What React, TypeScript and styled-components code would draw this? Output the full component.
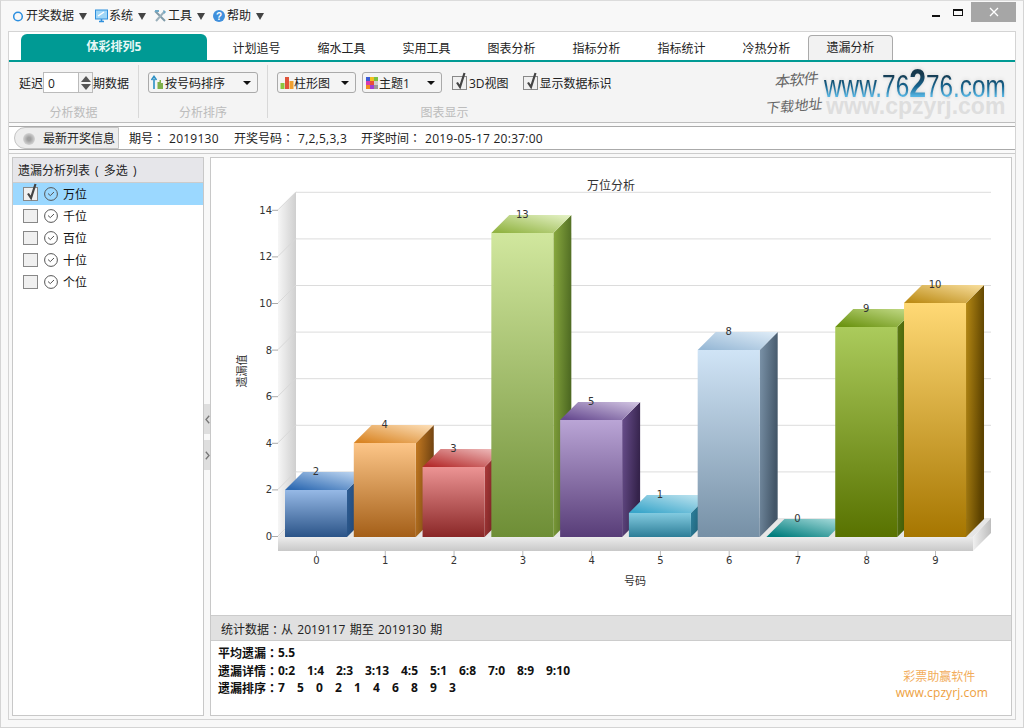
import React from "react";
import styled, { createGlobalStyle } from "styled-components";

const FONT = `"Open Sans", "Noto Sans CJK SC", sans-serif`;

const Global = createGlobalStyle`
  html, body { margin: 0; padding: 0; background: #f5f5f5; overflow: hidden; }
  * { box-sizing: border-box; }
  body { font: 12px/16px ${FONT}; color: #222; }
`;

const Root = styled.div`
  width: 1024px; height: 728px; border: 1px solid #d4d4d4; border-top-color: #dcdcdc;
  background: #f8f8f8; display: flex; flex-direction: column; padding-bottom: 7px; overflow: hidden;
`;
const TitleBar = styled.div`
  height: 30px; flex: none; display: flex; align-items: flex-start; padding-left: 12px;
`;
const MenuItem = styled.div`
  display: flex; align-items: center; height: 30px; margin-right: 8px; gap: 1px; color: #222;
`;
const MenuIconWrap = styled.span`
  display: flex; margin-right: 1px;
`;
const MenuArrow = styled.span`
  width: 0; height: 0; margin-left: 4px;
  border-left: 4px solid transparent; border-right: 4px solid transparent; border-top: 7px solid #444;
`;
const WinControls = styled.div`
  margin-left: auto; display: flex; align-items: flex-start; margin-right: 7px;
`;
const MinBtn = styled.span`
  width: 8px; height: 2px; background: #111; margin-top: 14px; margin-right: 13px;
`;
const MaxBtn = styled.span`
  width: 10px; height: 7px; border: 1px solid #111; border-top-width: 2px; margin-top: 8px; margin-right: 8px;
`;
const CloseBtn = styled.span`
  width: 45px; height: 20px; margin-top: 1px; background: #a6a6a6; display: flex; align-items: center; justify-content: center;
`;
const Frame = styled.div`
  flex: 1; margin: 0 7px; border: 1px solid #d4d4d4; background: #f5f5f5; display: flex; flex-direction: column; min-height: 0;
`;
const TabBar = styled.div`
  height: 30px; flex: none; background: #fff; border-bottom: 2px solid #009a94; display: flex; align-items: flex-end; padding-left: 12px;
`;
const BrandTab = styled.div`
  width: 186px; height: 26px; margin-right: 7px; background: #009a94; color: #e8f8f6; font-weight: 700; border-radius: 6px 6px 0 0;
  display: flex; align-items: center; justify-content: center; padding-bottom: 1px;
`;
const Tab = styled.div<{ $active?: boolean }>`
  width: 85px; height: 25px; display: flex; align-items: center; justify-content: center; color: #222;
  ${(p) => p.$active ? `background:#f2f2f2;border:1px solid #aaa;border-bottom:0;border-radius:4px 4px 0 0;margin-left:-1px;padding-bottom:1px;` : `padding-top:3px;`}
`;
const Toolbar = styled.div`
  height: 61px; flex: none; border-bottom: 1px solid #bdbdbd; background: #f4f4f4; display: flex; align-items: flex-start;
`;
const Group = styled.div<{ $w: number; $pad: number; $noLine?: boolean }>`
  width: ${(p) => p.$w}px; height: 53px; margin-top: 3px; padding-left: ${(p) => p.$pad}px; flex: none;
  border-right: 1px solid ${(p) => (p.$noLine ? "transparent" : "#d8d8d8")}; display: flex; flex-direction: column;
`;
const GroupRow = styled.div`
  height: 21px; margin-top: 7px; display: flex; align-items: center; flex: none;
`;
const RowText = styled.span`
  padding-top: 2px; white-space: nowrap;
`;
const GroupLabel = styled.div<{ $pad: number }>`
  margin-top: 13px; margin-left: -${(p) => p.$pad}px; line-height: 14px; text-align: center; color: #bcbcbc;
`;
const NumberInput = styled.div`
  width: 36px; height: 21px; border: 1px solid #bbb; background: #fff; padding: 2px 0 0 4px; display: flex; align-items: center; font-size: 12px; color: #222;
`;
const Spin = styled.div`
  width: 14px; height: 21px; border: 1px solid #bbb; border-left: 0; display: flex; flex-direction: column; align-items: center; justify-content: center; gap: 2px; background: #f2f2f2;
`;
const Tri = styled.span<{ $dir: "up" | "down" }>`
  width: 0; height: 0; border-left: 5px solid transparent; border-right: 5px solid transparent;
  ${(p) => (p.$dir === "up" ? "border-bottom: 6px solid #555;" : "border-top: 6px solid #555;")}
`;
const Select = styled.div<{ $w: number; $gapRight?: number }>`
  width: ${(p) => p.$w}px; height: 21px; margin-right: ${(p) => p.$gapRight ?? 0}px; border: 1px solid #aaa; border-radius: 3px; background: #f4f4f4;
  display: flex; align-items: center; padding: 0 6px 0 2px; color: #222;
`;
const SelectArrow = styled.span`
  margin-left: auto; width: 0; height: 0; border-left: 4px solid transparent; border-right: 4px solid transparent; border-top: 4px solid #111;
`;
const Check = styled.label<{ $gapRight?: number }>`
  display: flex; align-items: center; gap: 2px; margin-right: ${(p) => p.$gapRight ?? 0}px; color: #222;
`;
const CheckBox = styled.span`
  position: relative; width: 15px; height: 14px; border: 1px solid #888; background: #f0f0f0; flex: none; display: block;
`;
const CheckMark = styled.svg`
  position: absolute; left: 1px; top: -5px;
`;
const Logo = styled.div`
  margin-left: auto; margin-right: 9px; margin-top: 1px; display: flex; width: 238px; height: 58px;
`;
const Calli = styled.div`
  width: 56px; flex: none; color: #666; font-size: 14px; line-height: 24px; font-family: "Noto Sans CJK SC", sans-serif; font-weight: 400;
  transform: skewX(-12deg) rotate(-5deg); padding-top: 2px;
`;
const CalliTop = styled.div`
  padding-left: 6px; font-size: 15px; line-height: 28px; letter-spacing: -1px;
`;
const WebCol = styled.div`
  display: flex; flex-direction: column; font-family: "Liberation Sans", sans-serif; width: 182px;
`;
const WebMain = styled.div`
  width: 240px; padding-top: 10px; font-size: 32px; line-height: 26px; white-space: nowrap; transform-origin: left top; transform: scaleX(.76);
  background: linear-gradient(180deg, #16384c 30%, #16648f 65%, #55b4e2 92%);
  -webkit-background-clip: text; background-clip: text; color: transparent; filter: drop-shadow(0 0 2px #cfcfcf);
`;
const BigDigit = styled.span`
  font-size: 40px; font-weight: 700; line-height: 0;
`;
const WebSub = styled.div`
  font-size: 23px; font-weight: 700; line-height: 14px; color: #dedede; white-space: nowrap; margin-left: 2px; letter-spacing: 0;
`;
const Spacer = styled.div`
  height: 3px; flex: none; background: #fafafa;
`;
const InfoBar = styled.div`
  height: 24px; flex: none; background: #fff; border-top: 1px solid #aaa; border-bottom: 1px solid #aaa; display: flex; align-items: center; padding-left: 5px;
`;
const InfoBtn = styled.div`
  width: 105px; height: 22px; border: 1px solid #c4c4c4; border-radius: 14px 0 0 14px; background: #ededed; display: flex; align-items: center; padding: 1px 0 0 8px; gap: 8px;
  margin-right: 10px; white-space: nowrap;
`;
const Led = styled.span`
  width: 12px; height: 12px; border-radius: 50%; flex: none; background: radial-gradient(circle, #a0a0a0 20%, #d8d8d8 75%, #ededed);
`;
const InfoItem = styled.span<{ $w: number }>`
  width: ${(p) => p.$w}px; flex: none; white-space: nowrap; color: #222; padding-top: 1px;
`;
const InfoVal = styled.span`
  margin-left: 4px; letter-spacing: .25px;
`;
const Colon = styled.span`
  font-family: "Noto Sans CJK TC", sans-serif;
`;
const Main = styled.div`
  flex: 1; min-height: 0; border-top: 1px solid #ccc; padding: 3px; display: flex; background: #f8f8f8;
`;
const LeftPanel = styled.div`
  width: 192px; flex: none; border: 1px solid #c8c8c8; background: #fff; display: flex; flex-direction: column;
`;
const LeftHead = styled.div`
  height: 25px; flex: none; padding: 2px 0 0 5px; background: #e6e6ea; border-bottom: 1px solid #ccc; display: flex; align-items: center; color: #222; word-spacing: 2px; white-space: pre;
`;
const ListRow = styled.div<{ $on?: boolean }>`
  height: 22px; flex: none; display: flex; align-items: center; padding-left: 10px; background: ${(p) => (p.$on ? "#9bd8ff" : "transparent")}; gap: 6px; color: #111;
`;
const ListText = styled.span`
  padding-top: 2px; margin-left: -1px;
`;
const Splitter = styled.div`
  width: 6px; flex: none; display: flex; flex-direction: column; align-items: stretch; justify-content: flex-start; padding-top: 247px; gap: 6px; background: #f8f8f8;
`;
const SplitTab = styled.div<{ $h: number }>`
  height: ${(p) => p.$h}px; background: #dedede; display: flex; align-items: center; justify-content: center;
`;
const RightPanel = styled.div`
  flex: 1; min-width: 0; border: 1px solid #c8c8c8; background: #fff; display: flex; flex-direction: column;
`;
const Chart = styled.svg`
  display: block; flex: none; width: 800px; height: 457px;
`;
const StatHead = styled.div`
  height: 26px; flex: none; background: #e0e0e0; border-top: 1px solid #ccc; border-bottom: 1px solid #ccc; padding: 3px 0 0 10px; display: flex; align-items: center; color: #222; word-spacing: 1.2px; white-space: pre;
`;
const Stats = styled.div`
  flex: 1; display: flex; justify-content: space-between; padding: 3px 23px 0 7px;
`;
const StatList = styled.div`
  font-weight: 700; color: #111; line-height: 17.5px;
`;
const StatLine = styled.div`
  display: flex; white-space: pre; height: 17.5px;
`;
const StatKey = styled.span`
  width: 60px; flex: none;
`;
const StatVal = styled.span<{ $w: number }>`
  width: ${(p) => p.$w}px; flex: none;
`;
const Mark = styled.div`
  padding-top: 25px; color: #f0a54a; line-height: 16px; text-align: center;
`;
const MarkTitle = styled.div`
  padding-right: 5px; color: #f2ad5c;
`;
const MarkUrl = styled.div`
  color: #ee9f3e; font-size: 12px; letter-spacing: .1px;
`;

const bars = [
  { v: 2, top: 490, f: ["#96b9e6", "#2b5488"], s: ["#2f6098", "#1c3c66"], t: ["#2e6ab2", "#c6dcf5"] },
  { v: 4, top: 443, f: ["#fdc688", "#a45f18"], s: ["#c87c22", "#6c4010"], t: ["#d98524", "#fde0ba"] },
  { v: 3, top: 467, f: ["#ec9494", "#8a2727"], s: ["#b23c3c", "#5c1a1a"], t: ["#b52d2d", "#f2c4c4"] },
  { v: 13, top: 233, f: ["#d1e79e", "#6e8e36"], s: ["#8bab40", "#4e6a22"], t: ["#92b443", "#e6f3c8"] },
  { v: 5, top: 420, f: ["#baa5d6", "#583d78"], s: ["#6a4f8e", "#35234b"], t: ["#684c91", "#d3c6e3"] },
  { v: 1, top: 513, f: ["#83cbe0", "#2d7d97"], s: ["#2f86a3", "#1c5266"], t: ["#3aa6ca", "#c8e8f2"] },
  { v: 8, top: 350, f: ["#d0e4f6", "#7690a6"], s: ["#7c94aa", "#435668"], t: ["#98b9d6", "#e0edf8"] },
  { v: 0, top: 537, f: ["#008080", "#008080"], s: ["#008080", "#008080"], t: ["#007d7d", "#b0e0e0"] },
  { v: 9, top: 327, f: ["#abcb5c", "#587200"], s: ["#5c7a14", "#384e00"], t: ["#6c9412", "#c6dd8c"] },
  { v: 10, top: 303, f: ["#ffd975", "#a67600"], s: ["#b68914", "#5c4200"], t: ["#bd8d18", "#f9df9e"] },
];
const barX = (i: number) => 285 + i * 68.78;
const labelStyle = { fontFamily: '"DejaVu Sans", sans-serif', fontSize: 10, fill: "#333" };
const cjkLabel = { fontFamily: '"Noto Sans CJK SC", sans-serif', fontSize: 11, fill: "#333" };

function ChartView() {
  const ticks = [0, 2, 4, 6, 8, 10, 12, 14];
  const yOf = (v: number) => 536 - v * 23.3;
  return (
    <Chart viewBox="211 158 800 457">
      <defs>
        <linearGradient id="wall" x1="0" x2="1" y1="0" y2="0">
          <stop offset="0" stopColor="#f6f6f6" />
          <stop offset="1" stopColor="#cfcfcf" />
        </linearGradient>
        <linearGradient id="floorFront" x1="0" x2="0" y1="0" y2="1">
          <stop offset="0" stopColor="#ececec" />
          <stop offset="1" stopColor="#c8c8c8" />
        </linearGradient>
        <linearGradient id="floorSide" x1="0" x2="1" y1="0" y2="0">
          <stop offset="0" stopColor="#f0f0f0" />
          <stop offset="1" stopColor="#bdbdbd" />
        </linearGradient>
        {bars.map((b, i) => (
          <React.Fragment key={i}>
            <linearGradient id={`f${i}`} x1="0" x2="0" y1="0" y2="1">
              <stop offset="0" stopColor={b.f[0]} />
              <stop offset="1" stopColor={b.f[1]} />
            </linearGradient>
            <linearGradient id={`s${i}`} x1="0" x2="1" y1="0" y2="0.35">
              <stop offset="0" stopColor={b.s[0]} />
              <stop offset="1" stopColor={b.s[1]} />
            </linearGradient>
            <linearGradient id={`t${i}`} x1="0" x2="1" y1="1" y2="0">
              <stop offset="0.08" stopColor={b.t[0]} />
              <stop offset="1" stopColor={b.t[1]} />
            </linearGradient>
          </React.Fragment>
        ))}
      </defs>

      {ticks.map((v) => (
        <line key={v} x1="296" x2="991" y1={yOf(v) - 18 + 0.5} y2={yOf(v) - 18 + 0.5} stroke="#dcdcdc" />
      ))}
      <polygon points="278,210 296,192 296,518 278,536" fill="url(#wall)" />
      {ticks.map((v) => (
        <g key={v}>
          <line x1="278" x2="296" y1={yOf(v)} y2={yOf(v) - 18} stroke="#d8d8d8" />
          <line x1="272" x2="278" y1={yOf(v) + 0.5} y2={yOf(v) + 0.5} stroke="#aaa" />
          <text x="272" y={yOf(v) + 4} textAnchor="end" {...labelStyle}>{v}</text>
        </g>
      ))}

      <polygon points="278,537 296,518 991,518 973,537" fill="#e6e6e6" />
      <polygon points="973,537 991,518 991,533 973,551" fill="url(#floorSide)" />
      <rect x="278" y="537" width="695" height="14" fill="url(#floorFront)" />

      {bars.map((b, i) => {
        const x = barX(i);
        const t = b.top;
        return (
          <g key={i}>
            {b.v > 0 && <polygon points={`${x + 62},${t} ${x + 80},${t - 18} ${x + 80},${519} ${x + 62},537`} fill={`url(#s${i})`} />}
            {b.v > 0 && <rect x={x} y={t} width="62" height={537 - t} fill={`url(#f${i})`} />}
            <polygon points={`${x},${t} ${x + 62},${t} ${x + 80},${t - 18} ${x + 18},${t - 18}`} fill={`url(#t${i})`} />
          </g>
        );
      })}
      {bars.map((b, i) => (
        <text key={i} x={barX(i) + 31} y={b.top - 15} textAnchor="middle" {...labelStyle}>{b.v}</text>
      ))}
      {bars.map((_, i) => (
        <g key={i}>
          <line x1={barX(i) + 31.5} x2={barX(i) + 31.5} y1="551" y2="556" stroke="#bbb" />
          <text x={barX(i) + 31.5} y="564" textAnchor="middle" {...labelStyle}>{i}</text>
        </g>
      ))}
      <text x="611" y="190" textAnchor="middle" {...cjkLabel} fontSize={12}>万位分析</text>
      <text x="635" y="585" textAnchor="middle" {...cjkLabel}>号码</text>
      <text transform="translate(246 371) rotate(-90)" textAnchor="middle" {...cjkLabel}>遗漏值</text>
    </Chart>
  );
}

const Ring = () => (
  <svg width="11" height="11" viewBox="0 0 11 11"><circle cx="5" cy="5.5" r="4.3" fill="none" stroke="#2c8fe0" strokeWidth="1.5" /></svg>
);
const MonitorIcon = () => (
  <svg width="13" height="14" viewBox="0 0 13 14">
    <rect x="0.5" y="1" width="12" height="9" fill="#9fd6f7" stroke="#2f8fdc" />
    <path d="M3 7 L9 3" stroke="#fff" strokeWidth="1.5" />
    <path d="M4 12.5h5M6.5 10v2.5" stroke="#2f8fdc" strokeWidth="1.6" />
  </svg>
);
const ToolIcon = () => (
  <svg width="13" height="14" viewBox="0 0 13 14">
    <path d="M1 2 L11 12" stroke="#7f9aa8" strokeWidth="2" />
    <path d="M11 2 L2 12" stroke="#9ab0bb" strokeWidth="2" />
    <path d="M1 1h4v2H1zM9 1l3 2-2 2z" fill="#6ea9c8" />
  </svg>
);
const HelpIcon = () => (
  <svg width="12" height="12" viewBox="0 0 12 12">
    <circle cx="6" cy="6" r="6" fill="#3f8fdc" />
    <text x="6" y="9.5" textAnchor="middle" fontSize="10" fontWeight="700" fill="#fff" fontFamily="'Liberation Sans', sans-serif">?</text>
  </svg>
);
const SortIcon = () => (
  <svg width="14" height="15" viewBox="0 0 14 15">
    <path d="M3 14V4M0.5 5L3 1.5 5.5 5" stroke="#2b8fc4" strokeWidth="1.6" fill="none" />
    <path d="M6.5 14V7h2V5h1.5v3H12v6z" fill="#7fb04a" />
  </svg>
);
const BarIcon = () => (
  <svg width="14" height="15" viewBox="0 0 14 15">
    <rect x="0.5" y="8" width="4" height="6" fill="#8cc63f" />
    <rect x="5" y="2" width="4" height="12" fill="#e0533a" />
    <rect x="9.5" y="6" width="4" height="8" fill="#f0a030" />
  </svg>
);
const ThemeIcon = () => (
  <svg width="14" height="15" viewBox="0 0 14 15">
    <rect x="1" y="2" width="4" height="4" fill="#3b5bd6" /><rect x="5" y="2" width="4" height="4" fill="#f0c020" /><rect x="9" y="2" width="4" height="4" fill="#7ac143" />
    <rect x="1" y="6" width="4" height="4" fill="#d63bb0" /><rect x="5" y="6" width="4" height="4" fill="#e8503a" /><rect x="9" y="6" width="4" height="4" fill="#cfcfcf" />
    <rect x="1" y="10" width="4" height="4" fill="#f08a20" /><rect x="5" y="10" width="4" height="4" fill="#a040d0" /><rect x="9" y="10" width="4" height="4" fill="#9a9a9a" />
  </svg>
);
const TickMark = () => (
  <CheckMark width="14" height="18" viewBox="0 0 14 18">
    <path d="M3 10.5 L6 15 L10.5 1" stroke="#444" strokeWidth="2.2" fill="none" />
  </CheckMark>
);
const ClockCheck = () => (
  <svg width="14" height="14" viewBox="0 0 14 14">
    <circle cx="7" cy="7" r="6.4" fill="none" stroke="#555" />
    <path d="M4 6.5 L6.3 8.6 L10 5" stroke="#555" fill="none" />
  </svg>
);
const Chevron = ({ left }: { left?: boolean }) => (
  <svg width="5" height="9" viewBox="0 0 5 9">
    <path d={left ? "M4.2 .8 L1 4.5 L4.2 8.2" : "M.8 .8 L4 4.5 L.8 8.2"} stroke="#777" strokeWidth="1.3" fill="none" />
  </svg>
);

const tabs = ["计划追号", "缩水工具", "实用工具", "图表分析", "指标分析", "指标统计", "冷热分析"];
const positions = ["万位", "千位", "百位", "十位", "个位"];
const detail = [["0:2", 29], ["1:4", 29], ["2:3", 29], ["3:13", 36], ["4:5", 29], ["5:1", 29], ["6:8", 29], ["7:0", 29], ["8:9", 29], ["9:10", 30]] as const;
const order = [7, 5, 0, 2, 1, 4, 6, 8, 9, 3];

export default function App() {
  return (
    <Root>
      <Global />
      <TitleBar>
        <MenuItem><MenuIconWrap><Ring /></MenuIconWrap><span>开奖数据</span><MenuArrow /></MenuItem>
        <MenuItem><MonitorIcon /><span>系统</span><MenuArrow /></MenuItem>
        <MenuItem><ToolIcon /><span>工具</span><MenuArrow /></MenuItem>
        <MenuItem><MenuIconWrap><HelpIcon /></MenuIconWrap><span>帮助</span><MenuArrow /></MenuItem>
        <WinControls>
          <MinBtn />
          <MaxBtn />
          <CloseBtn>
            <svg width="10" height="10" viewBox="0 0 10 10"><path d="M1 1L9 9M9 1L1 9" stroke="#fff" strokeWidth="1.3" /></svg>
          </CloseBtn>
        </WinControls>
      </TitleBar>
      <Frame>
        <TabBar>
          <BrandTab>体彩排列5</BrandTab>
          {tabs.map((t) => <Tab key={t}>{t}</Tab>)}
          <Tab $active>遗漏分析</Tab>
        </TabBar>
        <Toolbar>
          <Group $w={130} $pad={10}>
            <GroupRow>
              <RowText>延迟</RowText>
              <NumberInput>0</NumberInput>
              <Spin><Tri $dir="up" /><Tri $dir="down" /></Spin>
              <RowText>期数据</RowText>
            </GroupRow>
            <GroupLabel $pad={10}>分析数据</GroupLabel>
          </Group>
          <Group $w={129} $pad={9}>
            <GroupRow>
              <Select $w={110}><SortIcon /><RowText>按号码排序</RowText><SelectArrow /></Select>
            </GroupRow>
            <GroupLabel $pad={9}>分析排序</GroupLabel>
          </Group>
          <Group $w={354} $pad={9} $noLine>
            <GroupRow>
              <Select $w={79} $gapRight={6}><BarIcon /><RowText>柱形图</RowText><SelectArrow /></Select>
              <Select $w={80} $gapRight={10}><ThemeIcon /><RowText>主题1</RowText><SelectArrow /></Select>
              <Check $gapRight={14}><CheckBox><TickMark /></CheckBox><RowText>3D视图</RowText></Check>
              <Check><CheckBox><TickMark /></CheckBox><RowText>显示数据标识</RowText></Check>
            </GroupRow>
            <GroupLabel $pad={9}>图表显示</GroupLabel>
          </Group>
          <Logo>
            <Calli>
              <CalliTop>本软件</CalliTop>
              <div>下载地址</div>
            </Calli>
            <WebCol>
              <WebMain>www.76<BigDigit>2</BigDigit>76.com</WebMain>
              <WebSub>www.cpzyrj.com</WebSub>
            </WebCol>
          </Logo>
        </Toolbar>
        <Spacer />
        <InfoBar>
          <InfoBtn><Led /><span>最新开奖信息</span></InfoBtn>
          <InfoItem $w={105}>期号<Colon>：</Colon><InfoVal>2019130</InfoVal></InfoItem>
          <InfoItem $w={127}>开奖号码<Colon>：</Colon><InfoVal>7,2,5,3,3</InfoVal></InfoItem>
          <InfoItem $w={220}>开奖时间<Colon>：</Colon><InfoVal>2019-05-17 20:37:00</InfoVal></InfoItem>
        </InfoBar>
        <Spacer />
        <Main>
          <LeftPanel>
            <LeftHead>遗漏分析列表 ( 多选 )</LeftHead>
            {positions.map((p, i) => (
              <ListRow key={p} $on={i === 0}>
                <CheckBox>{i === 0 && <TickMark />}</CheckBox>
                <ClockCheck />
                <ListText>{p}</ListText>
              </ListRow>
            ))}
          </LeftPanel>
          <Splitter>
            <SplitTab $h={30}><Chevron left /></SplitTab>
            <SplitTab $h={30}><Chevron /></SplitTab>
          </Splitter>
          <RightPanel>
            <ChartView />
            <StatHead>统计数据<Colon>：</Colon>从 2019117 期至 2019130 期</StatHead>
            <Stats>
              <StatList>
                <StatLine><StatKey>平均遗漏<Colon>：</Colon></StatKey><span>5.5</span></StatLine>
                <StatLine>
                  <StatKey>遗漏详情<Colon>：</Colon></StatKey>
                  {detail.map(([t, w]) => <StatVal key={t} $w={w}>{t}</StatVal>)}
                </StatLine>
                <StatLine>
                  <StatKey>遗漏排序<Colon>：</Colon></StatKey>
                  {order.map((n) => <StatVal key={n} $w={19}>{n}</StatVal>)}
                </StatLine>
              </StatList>
              <Mark>
                <MarkTitle>彩票助赢软件</MarkTitle>
                <MarkUrl>www.cpzyrj.com</MarkUrl>
              </Mark>
            </Stats>
          </RightPanel>
        </Main>
      </Frame>
    </Root>
  );
}
